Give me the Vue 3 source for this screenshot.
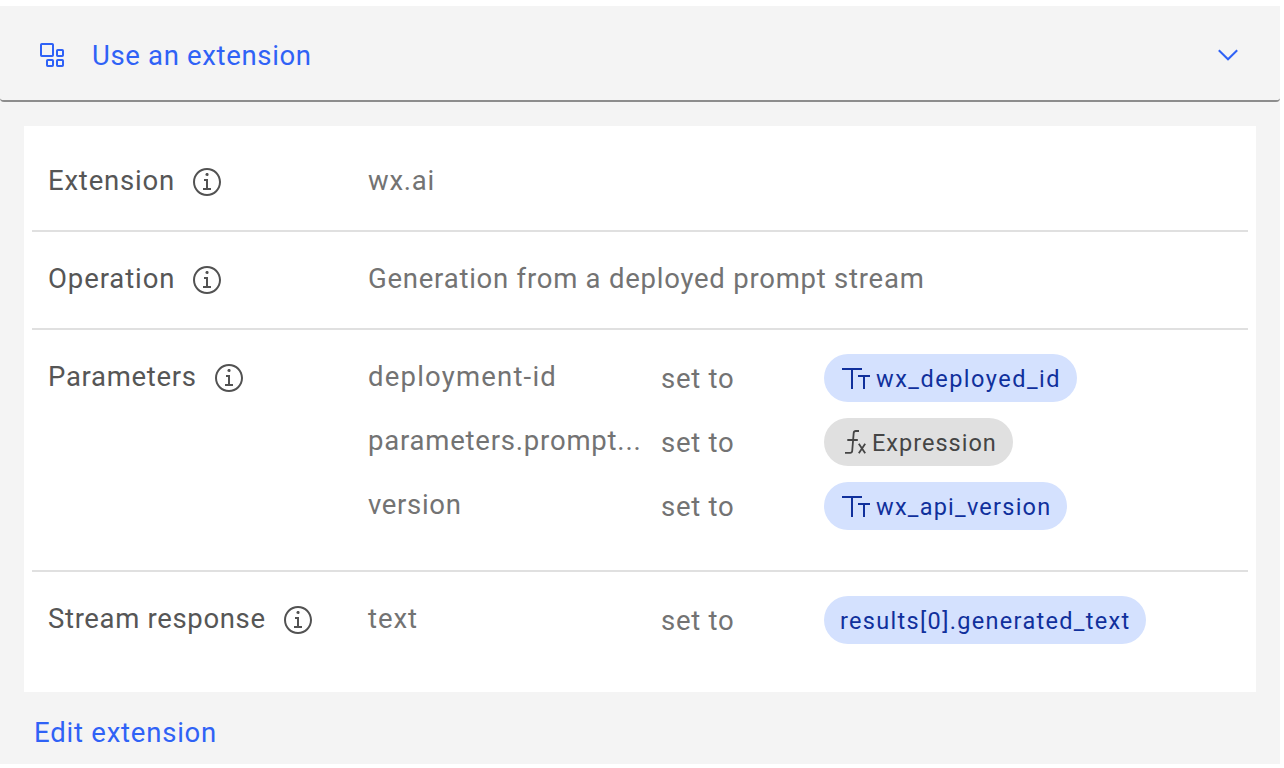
<script setup>
const rows = [
  { label: 'Extension', track: 0.8, plain: 'wx.ai', plainTrack: 0.75 },
  { label: 'Operation', track: 0.9, plain: 'Generation from a deployed prompt stream', plainTrack: 0.76 },
  {
    label: 'Parameters',
    track: 0.7,
    values: [
      { name: 'deployment-id', track: 1.2, chip: 'wx_deployed_id', chipTrack: 1.5, kind: 'text' },
      { name: 'parameters.prompt...', track: 0.79, chip: 'Expression', chipTrack: 1.0, kind: 'fx' },
      { name: 'version', track: 0.68, chip: 'wx_api_version', chipTrack: 1.24, kind: 'text' },
    ],
  },
  {
    label: 'Stream response',
    track: 0.66,
    values: [{ name: 'text', track: 0.9, chip: 'results[0].generated_text', chipTrack: 1.32, kind: 'none' }],
  },
]
const spacing = (n) => ({ letterSpacing: n + 'px' })
</script>

<template>
  <main class="panel">
    <header class="head">
      <svg class="ext-icon" width="24" height="24" viewBox="0 0 24 24">
        <rect x="1" y="1" width="12" height="12" rx="0.8" />
        <rect x="17" y="7" width="6" height="6" rx="0.8" />
        <rect x="7" y="17" width="6" height="6" rx="0.8" />
        <rect x="17" y="17" width="6" height="6" rx="0.8" />
      </svg>
      <span class="title">Use an extension</span>
      <svg class="chevron" width="20" height="12" viewBox="0 0 20 12">
        <path d="M.8 1.2 10 10.3l9.2-9.1" />
      </svg>
    </header>

    <section class="card">
      <div v-for="row in rows" :key="row.label" class="row" :class="{ multi: row.values }">
        <div class="label">
          <span class="txt" :style="spacing(row.track)">{{ row.label }}</span>
          <svg class="info" width="32" height="32" viewBox="0 0 16 16">
            <path d="M8.5 11V6.5h-2v1h1V11H6v1h4v-1zM8 3.5c-.4 0-.8.3-.8.8s.4.7.8.7.8-.3.8-.8-.4-.7-.8-.7z" />
            <path d="M8 15c-3.9 0-7-3.1-7-7s3.1-7 7-7 7 3.1 7 7-3.1 7-7 7zM8 2C4.7 2 2 4.7 2 8s2.7 6 6 6 6-2.7 6-6-2.7-6-6-6z" />
          </svg>
        </div>
        <div v-if="row.plain" class="txt value" :style="spacing(row.plainTrack)">{{ row.plain }}</div>
        <div v-else class="list">
          <div v-for="v in row.values" :key="v.name" class="entry">
            <span class="txt value" :style="spacing(v.track)">{{ v.name }}</span>
            <span class="set">set to</span>
            <span class="chip" :class="v.kind">
              <svg v-if="v.kind === 'text'" class="glyph" width="28" height="24" viewBox="0 0 28 24">
                <path d="M0 2h20v2h-9v19H9V4H0zM16 9h12v2h-5v12h-2V11h-5z" />
              </svg>
              <svg v-if="v.kind === 'fx'" class="glyph line" width="22" height="24" viewBox="0 0 22 24">
                <path d="M14 1h-3.2q-1.9 0-2.1 1.9L7.2 21q-.2 1.9-2.1 1.9H0M2.3 10h10.5M13.8 13.8l6.4 9.4M20.2 13.8l-6.4 9.4" />
              </svg>
              <span class="chip-text" :style="spacing(v.chipTrack)">{{ v.chip }}</span>
            </span>
          </div>
        </div>
      </div>
    </section>

    <a class="edit">Edit extension</a>
  </main>
</template>

<style scoped>
.panel {
  box-sizing: border-box;
  width: 1280px;
  height: 758px;
  margin-top: 6px;
  background: #f4f4f4;
  font-family: Roboto, "Liberation Sans", sans-serif;
  font-size: 27.5px;
  color: #565656;
  white-space: nowrap;
}
.head {
  box-sizing: border-box;
  height: 96px;
  display: flex;
  align-items: center;
  padding: 4px 42px 0 40px;
  border-bottom: 2px solid #8d8d8d;
  border-radius: 4px;
  color: #2f62f6;
}
.ext-icon,
.chevron {
  fill: none;
  stroke: currentColor;
  stroke-width: 2;
}
.title {
  margin-left: 28px;
  letter-spacing: 0.66px;
}
.chevron {
  margin-left: auto;
}
.card {
  margin: 24px 24px 0;
  padding: 8px;
  background: #fff;
}
.row {
  display: grid;
  grid-template-columns: 320px 1fr;
  padding: 24px 16px;
  border-bottom: 2px solid #e0e0e0;
}
.row.multi {
  padding-bottom: 40px;
}
.row:last-child {
  border-bottom: 0;
}
.label {
  display: flex;
  height: 48px;
}
.txt {
  height: 48px;
  line-height: 45px;
}
.info {
  margin: 8px 0 0 16px;
  fill: #525252;
}
.value,
.set {
  color: #737373;
}
.list {
  display: grid;
  gap: 16px;
}
.entry {
  display: grid;
  grid-template-columns: 293px 163px 1fr;
  height: 48px;
}
.set {
  line-height: 49px;
  letter-spacing: 0.74px;
}
.chip {
  box-sizing: border-box;
  justify-self: start;
  display: flex;
  height: 48px;
  padding: 0 16px 0 18px;
  border-radius: 24px;
  background: #d4e1fe;
  color: #10309c;
  font-size: 23.5px;
  line-height: 50px;
}
.chip.fx {
  padding-left: 21px;
  background: #e0e0e0;
  color: #454545;
}
.chip.none {
  padding: 0 15px 0 16px;
}
.glyph {
  margin: 12px 6px 0 0;
  fill: currentColor;
}
.fx .glyph {
  margin-right: 5px;
}
.glyph.line {
  fill: none;
  stroke: currentColor;
  stroke-width: 1.8;
}
.edit {
  display: block;
  margin: 23px 0 0 34px;
  line-height: 36px;
  letter-spacing: 0.78px;
  color: #2f62f6;
}
</style>
<style>
body {
  background: #fff;
}
</style>
